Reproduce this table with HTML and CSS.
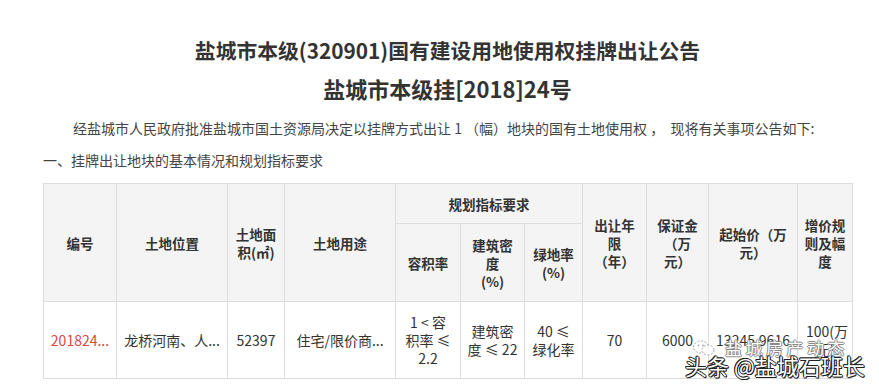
FILE: index.html
```html
<!DOCTYPE html>
<html lang="zh-CN">
<head>
<meta charset="utf-8">
<link rel="stylesheet" href="styles.css">
</head>
<body>
<div class="page">
  <h1 class="title">盐城市本级(320901)国有建设用地使用权挂牌出让公告</h1>
  <h2 class="subtitle">盐城市本级挂[2018]24号</h2>
  <p class="intro">经盐城市人民政府批准盐城市国土资源局决定以挂牌方式出让 1 （幅）地块的国有土地使用权 ，&nbsp;&nbsp;现将有关事项公告如下:</p>
  <p class="section">一、挂牌出让地块的基本情况和规划指标要求</p>
  <div class="table-wrap">
    <table class="land">
      <colgroup>
        <col style="width:73px"><col style="width:111px"><col style="width:57px"><col style="width:111px">
        <col style="width:65px"><col style="width:64px"><col style="width:58px">
        <col style="width:64px"><col style="width:62px"><col style="width:89px"><col style="width:55px">
      </colgroup>
      <thead>
        <tr class="h1">
          <th rowspan="2">编号</th>
          <th rowspan="2">土地位置</th>
          <th rowspan="2">土地面积(㎡)</th>
          <th rowspan="2">土地用途</th>
          <th colspan="3">规划指标要求</th>
          <th rowspan="2">出让年限<br>（年）</th>
          <th rowspan="2" class="narrow">保证金（万元）</th>
          <th rowspan="2">起始价（万元）</th>
          <th rowspan="2">增价规则及幅度</th>
        </tr>
        <tr class="h2">
          <th>容积率</th>
          <th>建筑密度<br>(%)</th>
          <th>绿地率<br>(%)</th>
        </tr>
      </thead>
      <tbody>
        <tr class="row">
          <td class="nowrap code">201824...</td>
          <td class="nowrap">龙桥河南、人...</td>
          <td class="nowrap">52397</td>
          <td class="nowrap">住宅/限价商...</td>
          <td>1 &lt; 容积率 ≤ 2.2</td>
          <td class="wide">建筑密度 ≤ 22</td>
          <td class="wide">40 ≤ 绿化率</td>
          <td>70</td>
          <td class="nowrap">6000</td>
          <td class="nowrap">13245.9616</td>
          <td>100(万元)</td>
        </tr>
      </tbody>
    </table>
    <div class="wm">
      <div class="wm-sub">
        <svg class="wm-icon" width="24" height="16" viewBox="0 0 24 16">
          <ellipse cx="9" cy="7" rx="7.5" ry="6" fill="none" stroke="#aaa" stroke-width="1" stroke-dasharray="2 1.5"/>
          <ellipse cx="16" cy="10" rx="6" ry="5" fill="#fff" fill-opacity="0.7" stroke="#aaa" stroke-width="1" stroke-dasharray="2 1.5"/>
          <circle cx="6.5" cy="5.5" r="0.9" fill="#aaa"/>
          <circle cx="11" cy="5.5" r="0.9" fill="#aaa"/>
        </svg>
        <span>盐城房产动态</span>
      </div>
      <div class="wm-main">头条 @盐城石班长</div>
    </div>
  </div>
</div>
</body>
</html>
```
FILE: styles.css
```css
html, body {
  margin: 0;
  padding: 0;
  background: #fff;
}
body {
  font-family: "Noto Sans CJK SC", "Noto Sans", sans-serif;
  color: #333;
  width: 879px;
  height: 389px;
  overflow: hidden;
}
.page {
  padding: 34px 0 0 43px;
  width: 809px;
}
.title {
  margin: 0;
  text-align: center;
  font-size: 20.8px;
  font-weight: bold;
  line-height: 32px;
  color: #333;
}
.subtitle {
  margin: 6px 0 0;
  text-align: center;
  font-size: 22px;
  font-weight: bold;
  line-height: 32px;
  color: #333;
}
.intro {
  margin: 14px 0 0 30px;
  font-size: 14px;
  line-height: 20px;
  color: #444;
  white-space: nowrap;
}
.section {
  margin: 12px 0 0 0;
  font-size: 14px;
  line-height: 20px;
  color: #444;
}
.table-wrap {
  position: relative;
  margin-top: 13px;
}
.land {
  table-layout: fixed;
  border-collapse: collapse;
  width: 809px;
  font-size: 13px;
  color: #333;
}
.land th, .land td {
  border: 1px solid #ddd;
  text-align: center;
  padding: 0 6px;
  overflow: hidden;
}
.land th {
  background: #f4f4f4;
  font-size: 13.5px;
  font-weight: bold;
  line-height: 18px;
}
.land th.narrow { padding: 0 10px; }
.h1 { height: 40px; }
.h2 { height: 78px; }
.row { height: 77px; }
.row td {
  font-size: 14px;
  line-height: 18px;
  color: #333;
  background: #fff;
  padding: 0 8px;
}
.row td.wide { padding: 0 4px; }
.row td.nowrap { white-space: nowrap; padding: 0 2px; }
.row td.code { color: #d9493e; }
.wm {
  position: absolute;
  left: 642px;
  top: 142px;
  width: 220px;
  height: 60px;
}
.wm-sub {
  position: absolute;
  left: 7px;
  top: 11px;
  display: flex;
  align-items: center;
  gap: 9px;
  font-size: 17px;
  line-height: 24px;
  color: #fff;
  letter-spacing: 3.5px;
  text-shadow: -1px 0 #888, 1px 0 #888, 0 -1px #888, 0 1px #888;
}
.wm-icon { display: block; }
.wm-main {
  position: absolute;
  left: 0;
  top: 25px;
  font-size: 22px;
  line-height: 30px;
  color: #fff;
  white-space: nowrap;
  text-shadow: -1px 0 #222, 1px 0 #222, 0 -1px #222, 0 1px #222, 1px 1px #222, -1px -1px #222;
}
```
